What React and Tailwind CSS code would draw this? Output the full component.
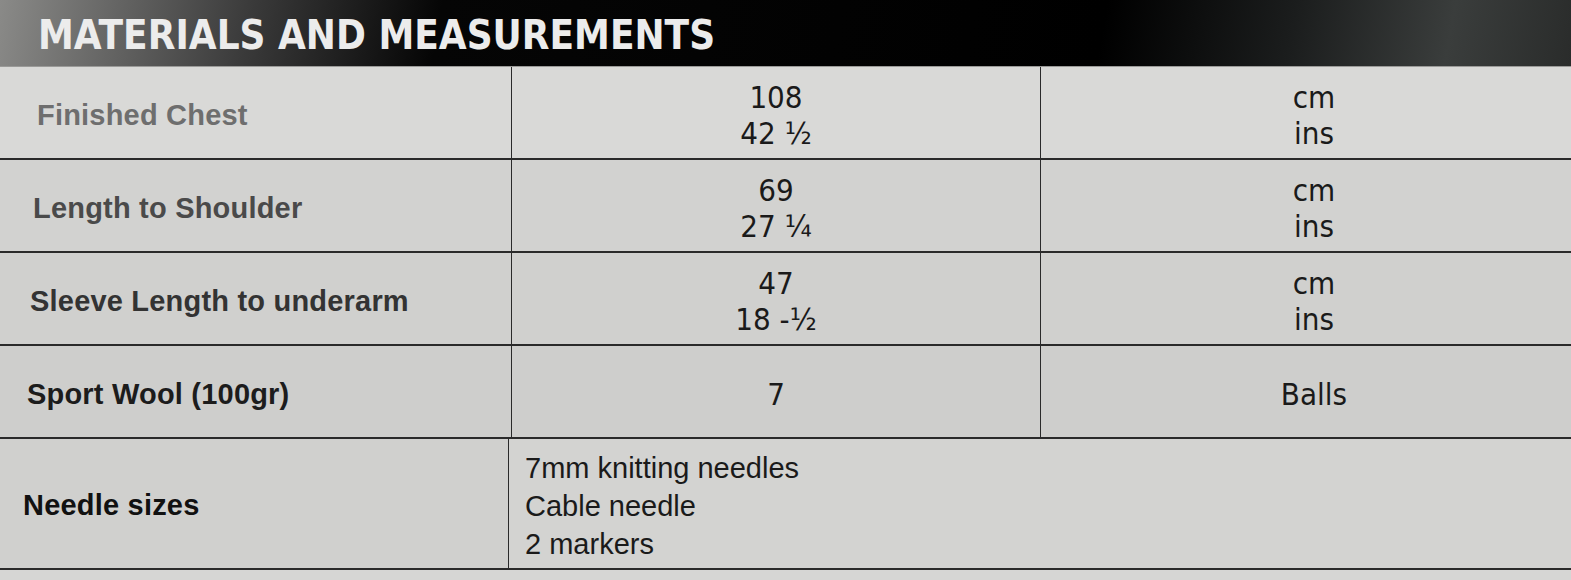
import React from "react";

const rows = [
  { label: "Finished Chest", values: ["108", "42 ½"], units: ["cm", "ins"], pad: "pl-[37px]", color: "text-[#6e6e6e]", bg: "bg-[#d9d9d7]" },
  { label: "Length to Shoulder", values: ["69", "27 ¼"], units: ["cm", "ins"], pad: "pl-[33px]", color: "text-[#4a4a4a]", bg: "bg-[#d2d2d0]" },
  { label: "Sleeve Length to underarm", values: ["47", "18 -½"], units: ["cm", "ins"], pad: "pl-[30px]", color: "text-[#333333]", bg: "bg-[#d0d0ce]" },
  { label: "Sport Wool (100gr)", values: ["7"], units: ["Balls"], pad: "pl-[27px]", color: "text-[#1c1c1c]", bg: "bg-[#cececc]" },
];

const label = "font-['Liberation_Sans',Arial,sans-serif] font-bold text-[29px] tracking-[0.2px]";
const value = "font-['DejaVu_Sans_Condensed','DejaVu_Sans',sans-serif] text-[31px] leading-[36px] text-[#1a1a1a]";

export default function App() {
  return (
    <div className="w-[1571px] h-[580px] overflow-hidden bg-[#cfcfcd]">
      {/* title bar */}
      <div className="h-[67px] flex items-end pb-[11px] pl-[38px] bg-[linear-gradient(100deg,#8a8a88_0%,#3a3a3a_16%,#050505_28%,#000_70%,#1b1d1d_82%,#3a3d3c_92%,#2a2c2b_100%)] border-b border-[#9a9a98]">
        <h1 className="font-['DejaVu_Sans_Condensed','DejaVu_Sans',sans-serif] font-bold text-[40px] leading-none text-[#ececec]">
          MATERIALS AND MEASUREMENTS
        </h1>
      </div>

      <div className="grid grid-cols-[511px_529px_1fr]">
        {rows.map((r) => (
          <React.Fragment key={r.label}>
            <div className={`h-[93px] flex items-center pt-[6px] border-b-2 border-[#2a2a2a] ${r.bg} ${r.pad}`}>
              <span className={`${label} ${r.color}`}>{r.label}</span>
            </div>
            <div className={`h-[93px] flex flex-col items-center justify-center pt-[4px] border-b-2 border-l border-[#2a2a2a] ${r.bg}`}>
              {r.values.map((v) => (
                <span key={v} className={value}>{v}</span>
              ))}
            </div>
            <div className={`h-[93px] flex flex-col items-center justify-center pt-[4px] pl-[16px] border-b-2 border-l border-[#2a2a2a] ${r.bg}`}>
              {r.units.map((u) => (
                <span key={u} className={value}>{u}</span>
              ))}
            </div>
          </React.Fragment>
        ))}

        <div className="h-[131px] flex items-center pt-[4px] pl-[23px] border-b-2 border-[#2a2a2a] bg-[#d0d0ce]">
          <span className={`${label} text-[#111]`}>Needle sizes</span>
        </div>
        <div className="col-span-2 h-[131px] flex flex-col justify-center pt-[4px] pl-[16px] -ml-[3px] border-b-2 border-l border-[#2a2a2a] bg-[#d3d3d1] font-['Liberation_Sans',Arial,sans-serif] text-[29px] leading-[38px] text-[#1a1a1a]">
          <span>7mm knitting needles</span>
          <span>Cable needle</span>
          <span>2 markers</span>
        </div>
      </div>
      <div className="h-[10px] bg-[#d6d6d4]" />
    </div>
  );
}
